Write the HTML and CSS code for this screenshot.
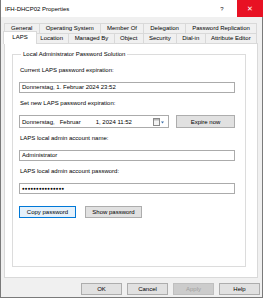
FILE: index.html
```html
<!DOCTYPE html>
<html>
<head>
	<meta charset="utf-8">
	<title>IFH-DHCP02 Properties</title>
	<link rel="stylesheet" href="styles.css">
</head>
<body>
	<div class="window">
		<div class="titlebar">
			<span class="title">IFH-DHCP02 Properties</span>
			<span class="help-q">?</span>
			<span class="close">&#x2715;</span>
		</div>

		<div class="tabs">
			<div class="tab-row">
				<div class="tab">General</div>
				<div class="tab">Operating System</div>
				<div class="tab">Member Of</div>
				<div class="tab">Delegation</div>
				<div class="tab">Password Replication</div>
			</div>
			<div class="tab-row">
				<div class="tab active">LAPS</div>
				<div class="tab">Location</div>
				<div class="tab">Managed By</div>
				<div class="tab">Object</div>
				<div class="tab">Security</div>
				<div class="tab">Dial-in</div>
				<div class="tab">Attribute Editor</div>
			</div>
		</div>

		<div class="panel">
			<fieldset class="group">
				<legend>Local Administrator Password Solution</legend>

				<div class="label first">Current LAPS password expiration:</div>
				<div class="textbox">Donnerstag, 1. Februar 2024 23:52</div>

				<div class="label">Set new LAPS password expiration:</div>
				<div class="date-row">
					<div class="datepicker">
						<span class="dp-day">Donnerstag,</span>
						<span class="dp-month">Februar</span>
						<span class="dp-rest">1, 2024 11:52</span>
						<svg class="dp-icon" width="12" height="8" viewBox="0 0 12 8">
							<rect x="0.5" y="0.5" width="6" height="7" fill="#f4f4f4" stroke="#8a8a8a"/>
							<rect x="1" y="1" width="5" height="1.5" fill="#b8b8b8"/>
							<path d="M8 3.5 L11 3.5 L9.5 5.5 Z" fill="#3c6ea8"/>
						</svg>
					</div>
					<button class="btn expire">Expire now</button>
				</div>

				<div class="label">LAPS local admin account name:</div>
				<div class="textbox">Administrator</div>

				<div class="label">LAPS local admin account password:</div>
				<div class="textbox password">&#9679;&#9679;&#9679;&#9679;&#9679;&#9679;&#9679;&#9679;&#9679;&#9679;&#9679;&#9679;&#9679;&#9679;&#9679;</div>

				<div class="pw-buttons">
					<button class="btn focused">Copy password</button>
					<button class="btn">Show password</button>
				</div>
			</fieldset>
		</div>

		<div class="dialog-buttons">
			<button class="btn">OK</button>
			<button class="btn">Cancel</button>
			<button class="btn disabled">Apply</button>
			<button class="btn">Help</button>
		</div>
	</div>
</body>
</html>
```

FILE: styles.css
```css
html, body {
	background: #fff;
	margin: 0;
	padding: 0;
}
body {
	font: 6px "Liberation Sans", Arial, sans-serif;
	color: #000;
	width: 263px;
	height: 300px;
	overflow: hidden;
}
.window {
	box-sizing: border-box;
	width: 263px;
	height: 298px;
	background: #f0f0f0;
	border: 1px solid #7a7a7a;
	border-top: none;
	display: flex;
	flex-direction: column;
}
.titlebar {
	height: 17px;
	background: #fff;
	display: flex;
	align-items: center;
}
.title {
	flex: 1;
	padding-left: 4px;
	font-size: 6px;
}
.help-q {
	width: 30px;
	text-align: center;
	font-size: 6px;
	color: #222;
}
.close {
	width: 26px;
	height: 17px;
	margin-right: -1px;
	background: #e81123;
	color: #fff;
	font-size: 7px;
	line-height: 17px;
	text-align: center;
}
.tabs {
	margin: 6px 5px 0 3px;
}
.tab-row {
	display: flex;
	height: 10px;
	padding-left: 1px;
}
.tab {
	flex: 1 1 auto;
	box-sizing: border-box;
	border: 1px solid #d9d9d9;
	border-bottom: none;
	margin-left: -1px;
	padding: 0 2px;
	line-height: 9px;
	text-align: center;
	white-space: nowrap;
	background: #f0f0f0;
}
.tab.active {
	position: relative;
	z-index: 1;
	height: 13px;
	margin: -2px -2px -1px -2px;
	padding: 0 5px;
	line-height: 11px;
	background: #fff;
}
.panel {
	box-sizing: border-box;
	height: 235px;
	margin: 0 4px 0 3px;
	padding: 6px 11px 10px 7px;
	background: #fff;
	border: 1px solid #d9d9d9;
	display: flex;
}
.group {
	flex: 1;
	margin: 0;
	padding: 0 10px 0 6px;
	border: 1px solid #dcdcdc;
	display: flex;
	flex-direction: column;
	min-width: 0;
}
.group legend {
	padding: 0 2px;
	margin-left: 2px;
	line-height: 8px;
}
.label {
	line-height: 8px;
	margin-top: 6px;
	padding-left: 1px;
}
.label.first {
	margin-top: 8px;
}
.textbox {
	box-sizing: border-box;
	height: 11px;
	margin-top: 8px;
	border: 1px solid #ababab;
	background: #fff;
	line-height: 9px;
	padding-left: 2px;
	white-space: nowrap;
}
.password {
	font-size: 4.5px;
	letter-spacing: 0.1px;
	line-height: 9px;
}
.date-row {
	display: flex;
	margin-top: 8px;
	height: 13px;
	justify-content: space-between;
}
.datepicker {
	box-sizing: border-box;
	width: 150px;
	border: 1px solid #ababab;
	background: #fff;
	display: flex;
	align-items: center;
	padding-left: 2px;
	white-space: nowrap;
}
.dp-month {
	margin-left: 5px;
}
.dp-rest {
	margin-left: 15px;
}
.dp-icon {
	margin-left: auto;
	margin-right: 3px;
}
.btn {
	box-sizing: border-box;
	font: inherit;
	color: #000;
	height: 12px;
	padding: 0;
	margin: 0;
	background: #e1e1e1;
	border: 1px solid #adadad;
	line-height: 10px;
	text-align: center;
}
.btn.expire {
	width: 59px;
	height: 13px;
}
.btn.focused {
	border-color: #0078d7;
	background: #e5f1fb;
}
.btn.disabled {
	color: #a0a0a0;
	background: #cccccc;
	border-color: #bfbfbf;
}
.pw-buttons {
	display: flex;
	gap: 9px;
	margin-top: 12px;
}
.pw-buttons .btn {
	width: 57px;
}
.dialog-buttons {
	display: flex;
	justify-content: flex-end;
	gap: 5px;
	margin: 5px 2px 0 0;
}
.dialog-buttons .btn {
	width: 41px;
}
```
